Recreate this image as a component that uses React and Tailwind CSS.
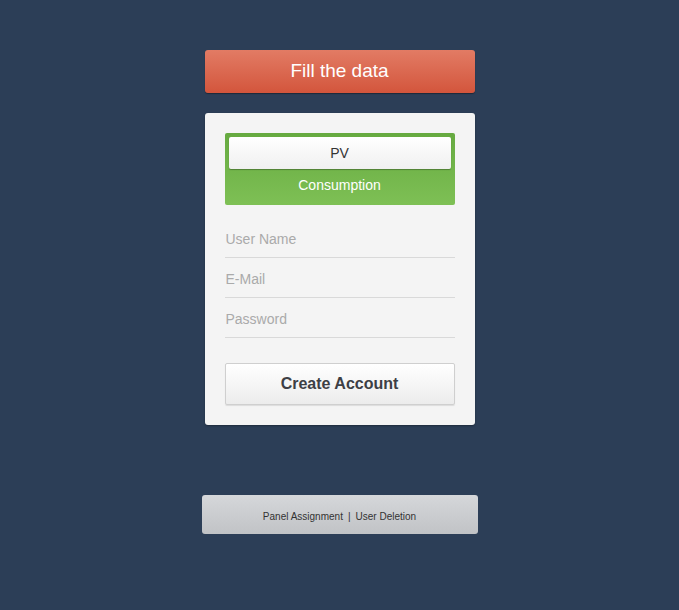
import React from 'react';

const App = () => {
  return (
    <div className="min-h-[610px] w-full bg-[#2c3e57] font-['Liberation_Sans',Arial,sans-serif] pt-[50px]">
      <div className="mx-auto flex w-[270px] flex-col">
        {/* Header */}
        <div className="flex h-[43px] items-center justify-center rounded-[3px] bg-gradient-to-b from-[#e27b64] to-[#d3553c] text-[19px] text-white shadow-[0_1px_1px_rgba(0,0,0,0.35)]">
          Fill the data
        </div>

        {/* Card */}
        <div className="mt-[20px] rounded-[3px] bg-[#f4f4f4] p-[20px] shadow-[0_1px_2px_rgba(0,0,0,0.3)]">
          <div className="flex h-[72px] flex-col rounded-[2px] bg-gradient-to-b from-[#66aa40] to-[#7ec055] p-[4px]">
            <button className="flex h-[32px] w-full items-center justify-center rounded-[2px] bg-gradient-to-b from-white to-[#f0f0f0] text-[14px] text-[#333] shadow-[0_1px_1px_rgba(0,0,0,0.3)]">
              PV
            </button>
            <div className="flex flex-1 items-center justify-center pt-[1px] text-[14px] text-white">
              Consumption
            </div>
          </div>

          <div className="mt-[13px] flex flex-col">
            {['User Name', 'E-Mail', 'Password'].map((p) => (
              <input
                key={p}
                type={p === 'Password' ? 'password' : 'text'}
                placeholder={p}
                className="h-[40px] w-full border-b border-[#d9d9d9] bg-transparent px-[1px] pt-[2px] text-[14px] text-[#333] placeholder-[#aaa] outline-none"
              />
            ))}
          </div>

          <button className="mt-[25px] flex h-[42px] w-full items-center justify-center rounded-[2px] border border-[#cfcfcf] bg-gradient-to-b from-white to-[#ececec] text-[16px] font-bold text-[#3d3f45] shadow-[0_1px_1px_rgba(0,0,0,0.1)]">
            Create Account
          </button>
        </div>
      </div>

      {/* Footer */}
      <div className="mx-auto mt-[70px] flex h-[39px] w-[276px] items-center justify-center rounded-[3px] bg-gradient-to-b from-[#d5d7da] to-[#c1c3c6] pt-[4px] text-[10px] text-[#333]">
        <span>Panel Assignment</span>
        <span className="mx-[5px]">|</span>
        <span>User Deletion</span>
      </div>
    </div>
  );
};

export default App;
